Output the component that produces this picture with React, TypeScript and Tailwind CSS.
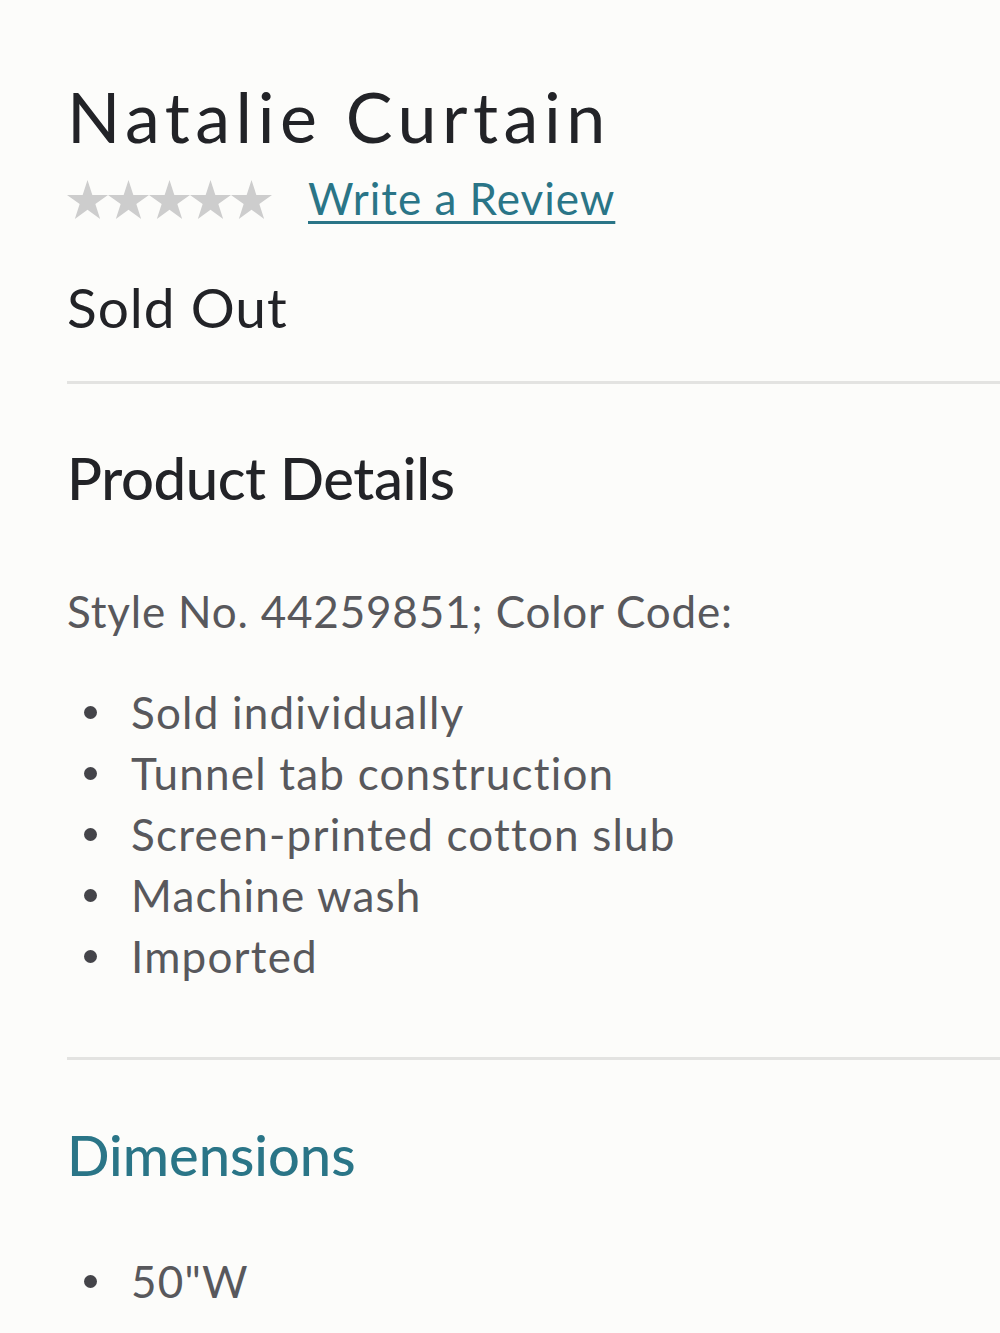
import React from "react";

const Star = () => (
  <svg width="41" height="39" viewBox="0 0 100 95.1" className="block shrink-0">
    <path
      d="M50 0L61.8 36.3H100L69.1 58.8L80.9 95.1L50 72.6L19.1 95.1L30.9 58.8L0 36.3H38.2Z"
      fill="#cdcdcd"
    />
  </svg>
);

const Bullet = ({ children }: { children: React.ReactNode }) => (
  <li className="flex items-center h-[61px] leading-[61px]">
    <span className="w-[64px] h-[61px] flex items-center shrink-0">
      <span className="ml-[17px] w-[13px] h-[13px] rounded-full bg-[#444449] shrink-0" />
    </span>
    <span>{children}</span>
  </li>
);

export default function App() {
  const font = { fontFamily: "Lato, 'Open Sans', sans-serif" };
  return (
    <div className="min-h-[1333px] w-[1000px] bg-[#fcfcfa] overflow-hidden" style={font}>
      <div className="pl-[67px] pt-[76px]">
        <h1 className="text-[70px] leading-[80px] text-[#222327] tracking-[5.5px] font-normal">Natalie Curtain</h1>
        <div className="mt-[17px] flex h-[50px] items-start">
          <div className="flex mt-[7px]">
            <Star />
            <Star />
            <Star />
            <Star />
            <Star />
          </div>
          <a className="ml-[36px] text-[44px] leading-[50px] text-[#2a7587] underline decoration-[3px] underline-offset-[6px] tracking-[1px]">
            Write a Review
          </a>
        </div>
        <div className="mt-[54px] text-[55px] leading-[60px] text-[#222327] tracking-[1px]">Sold Out</div>
        <div className="mt-[44px] h-[3px] bg-[#e3e3e1]" />
        <h2 className="mt-[62px] text-[58px] leading-[64px] text-[#222327] tracking-[-0.4px] font-medium">Product Details</h2>
        <div className="mt-[76px] text-[44px] leading-[50px] text-[#58585c] tracking-[0.8px]">
          Style No. 44259851; Color Code:
        </div>
        <ul className="mt-[46px] text-[44px] text-[#58585c] tracking-[1.2px]">
          <Bullet>Sold individually</Bullet>
          <Bullet>Tunnel tab construction</Bullet>
          <Bullet>Screen-printed cotton slub</Bullet>
          <Bullet>Machine wash</Bullet>
          <Bullet>Imported</Bullet>
        </ul>
        <div className="mt-[70px] h-[3px] bg-[#e3e3e1]" />
        <h2 className="mt-[63px] text-[56px] leading-[64px] text-[#2a7587] tracking-[0px] font-medium">Dimensions</h2>
        <ul className="mt-[64px] text-[44px] text-[#58585c] tracking-[1.2px]">
          <Bullet>50"W</Bullet>
        </ul>
      </div>
    </div>
  );
}
